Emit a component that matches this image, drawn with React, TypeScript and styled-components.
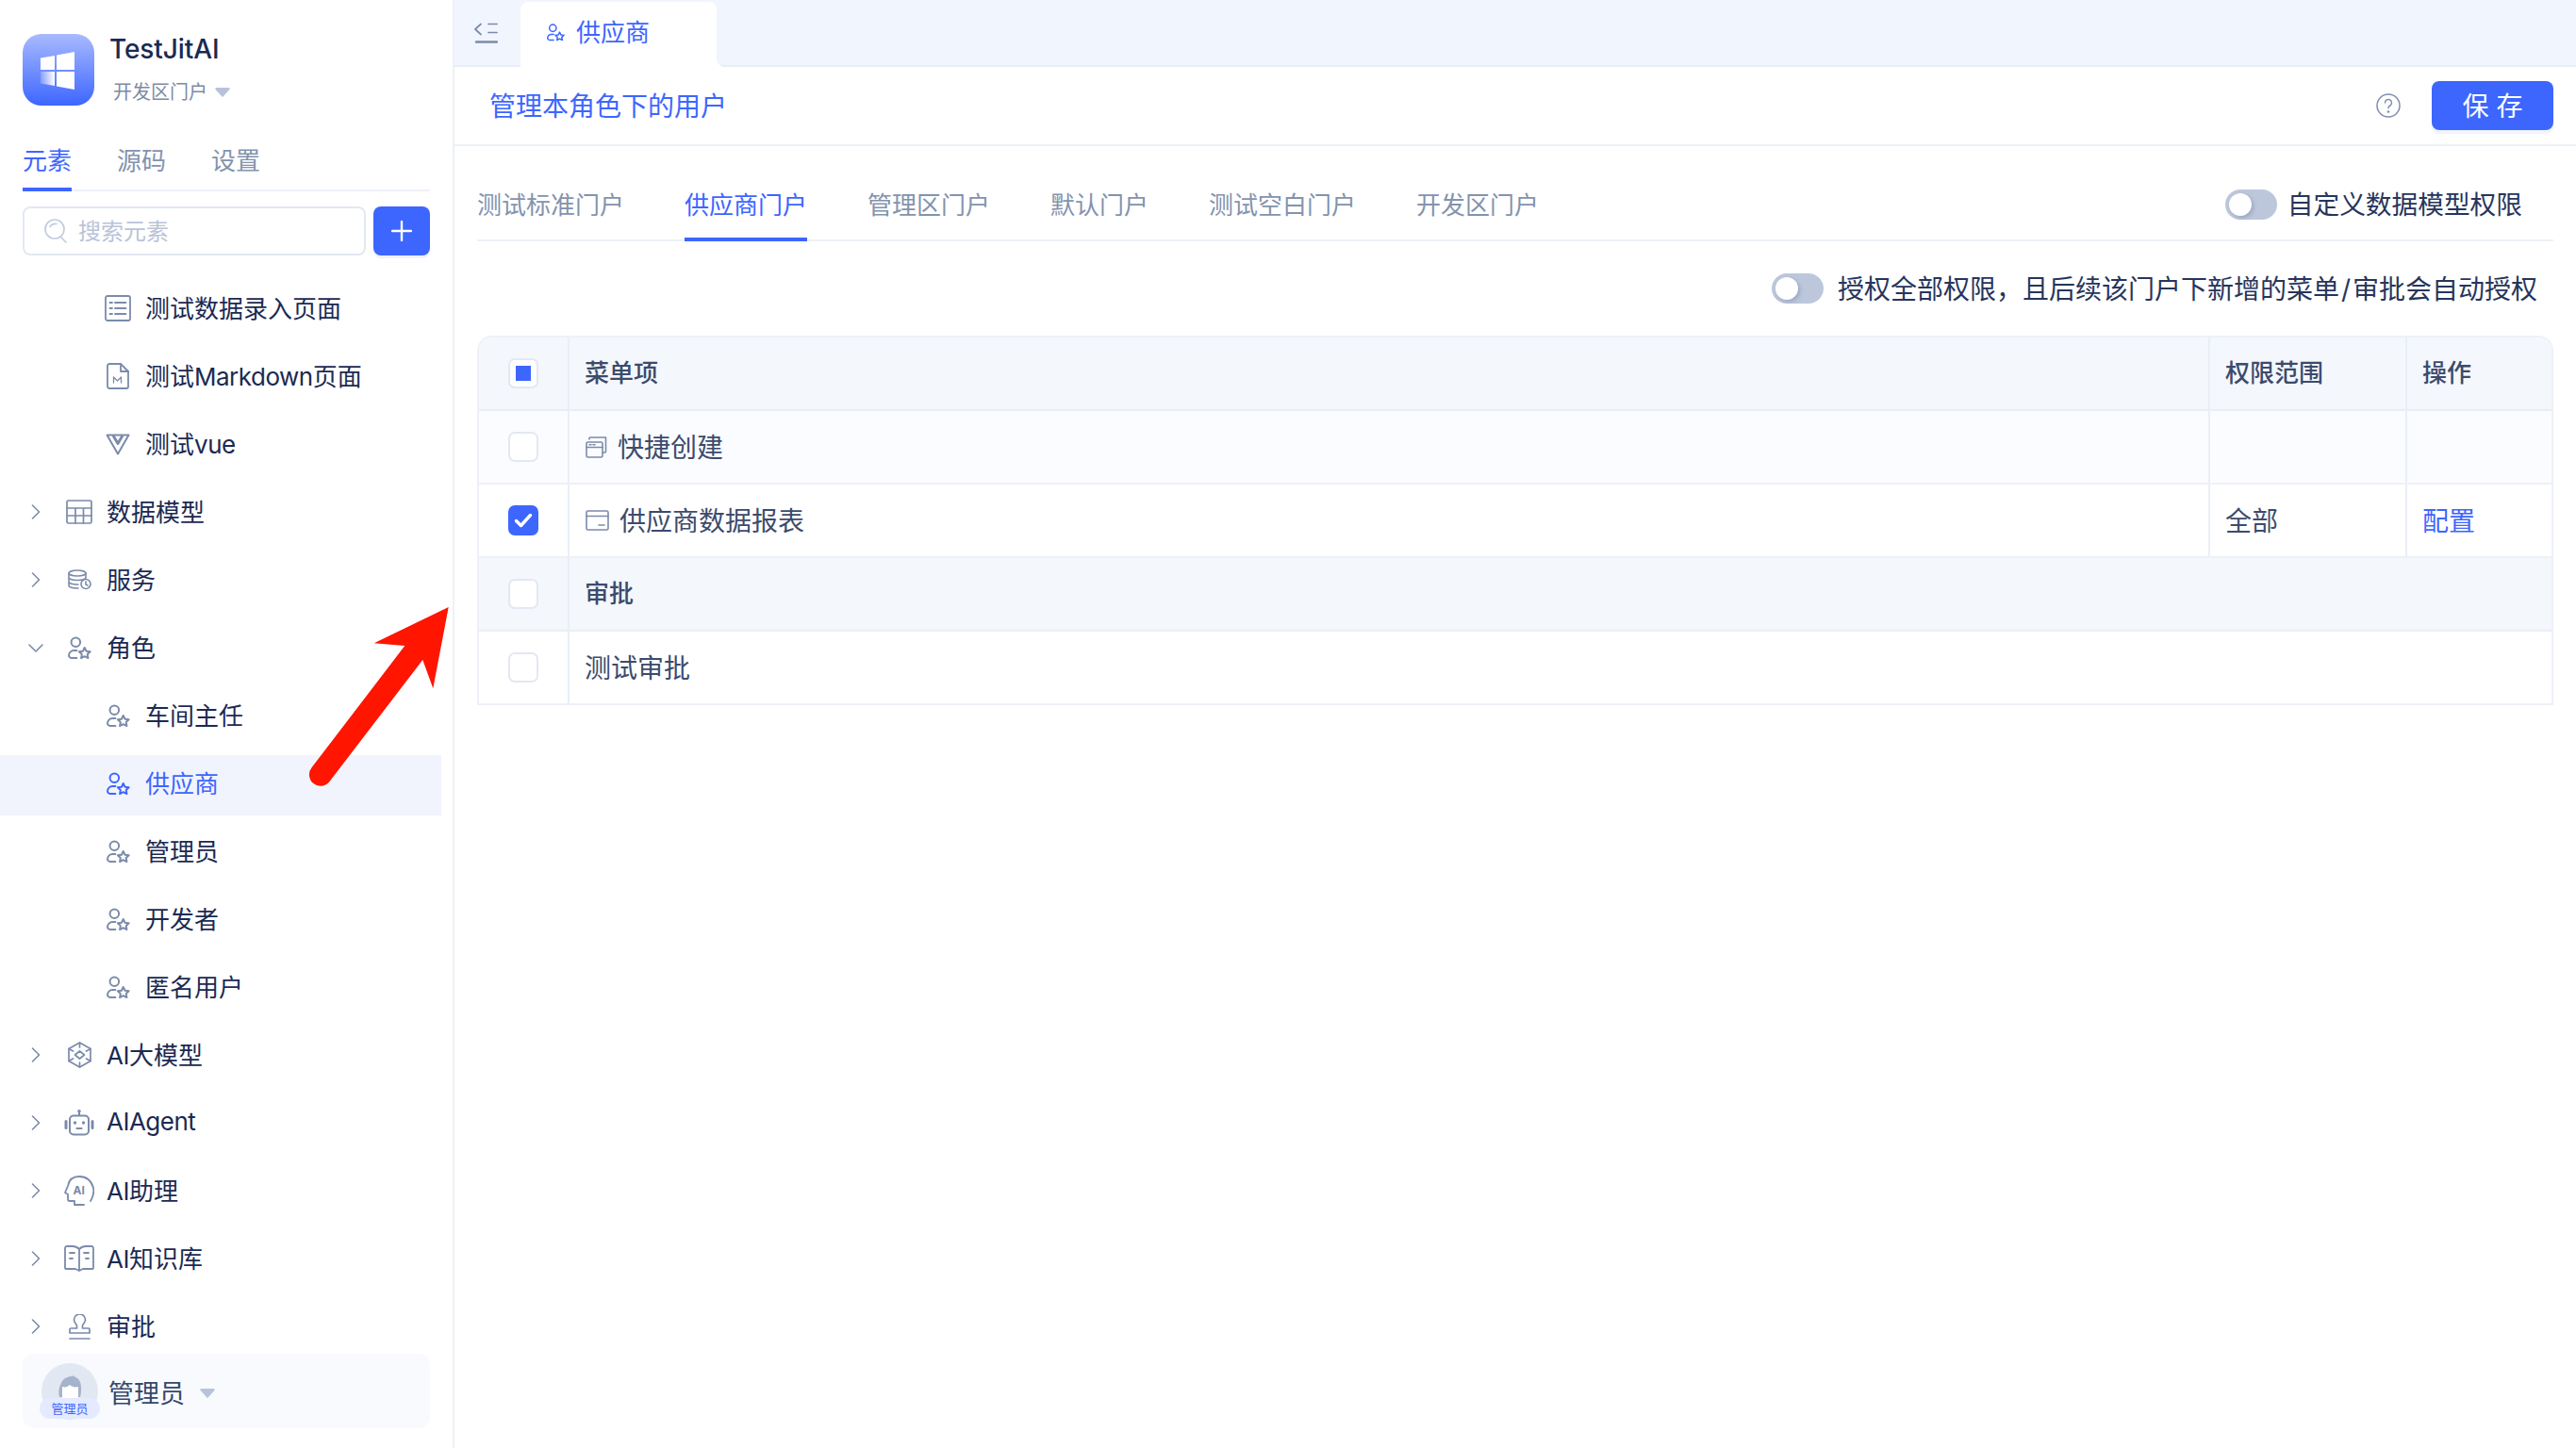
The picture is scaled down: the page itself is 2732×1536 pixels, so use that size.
import React from "react";
import styled, { createGlobalStyle } from "styled-components";

const BLUE = "#3d66ff";
const INK = "#1b2a52";
const CELL = "#3c4b6c";
const MUTED = "#8393ad";
const ICON = "#7b8bab";
const LINE = "#edf1f7";

const Global = createGlobalStyle`
  html, body { margin: 0; padding: 0; background: #fff; }
  #root { width: 2732px; height: 1536px; }
  * { box-sizing: border-box; }
  body { font-family: Inter, "Noto Sans CJK SC", "Noto Sans", sans-serif; color: ${INK}; }
`;

const Page = styled.div`
  position: relative;
  display: flex;
  width: 2732px;
  height: 1536px;
  overflow: hidden;
  background: #fff;
`;

/* ---------- sidebar ---------- */
const Sidebar = styled.aside`
  flex: 0 0 482px;
  height: 100%;
  display: flex;
  flex-direction: column;
  border-right: 2px solid ${LINE};
`;
const Brand = styled.div`
  display: flex;
  gap: 16px;
  height: 76px;
  margin: 36px 24px 0;
`;
const BrandText = styled.div`
  display: flex;
  flex-direction: column;
`;
const BrandName = styled.div`
  font-size: 28px;
  line-height: 32px;
  font-weight: 500;
  letter-spacing: -0.1px;
  color: ${INK};
`;
const BrandPortal = styled.div`
  display: flex;
  align-items: center;
  gap: 8px;
  margin: 14px 0 0 4px;
  font-size: 20px;
  line-height: 32px;
  color: #7d8aa3;
`;
const SideTabs = styled.div`
  display: flex;
  gap: 48px;
  height: 63px;
  margin: 28px 24px 0;
  border-bottom: 2px solid ${LINE};
`;
const SideTab = styled.div<{ $active?: boolean }>`
  position: relative;
  font-size: 26px;
  line-height: 61px;
  color: ${(p) => (p.$active ? BLUE : MUTED)};
  &::after {
    content: "";
    display: ${(p) => (p.$active ? "block" : "none")};
    position: absolute;
    left: 0;
    right: 0;
    bottom: -2px;
    height: 4px;
    background: ${BLUE};
  }
`;
const SearchRow = styled.div`
  display: flex;
  gap: 8px;
  height: 52px;
  margin: 16px 24px 0;
`;
const SearchBox = styled.div`
  flex: 1;
  display: flex;
  align-items: center;
  gap: 12px;
  padding-left: 21px;
  border: 2px solid #e3e8f2;
  border-radius: 8px;
  font-size: 24px;
  color: #b9c4d8;
`;
const SearchHint = styled.span`
  padding-bottom: 4px;
`;
const AddButton = styled.div`
  flex: 0 0 60px;
  display: flex;
  align-items: center;
  justify-content: center;
  border-radius: 8px;
  background: ${BLUE};
  box-shadow: 0 3px 0 #eef2ff;
`;
const Tree = styled.div`
  flex: 1;
  min-height: 0;
  overflow: hidden;
  display: flex;
  flex-direction: column;
  gap: 8px;
  width: 468px;
  margin-top: 26px;
`;
const TreeRow = styled.div<{ $level: number; $active?: boolean }>`
  flex: 0 0 64px;
  display: flex;
  align-items: center;
  padding: 0 0 4px ${(p) => (p.$level === 0 ? 28 : 108)}px;
  font-size: 26px;
  color: ${(p) => (p.$active ? BLUE : INK)};
  background: ${(p) => (p.$active ? "#f1f4fd" : "transparent")};
`;
const TreeLabel = styled.span`
  padding-bottom: 4px;
`;
const LatinRun = styled.span`
  letter-spacing: -0.5px;
`;
const ChevronSlot = styled.span`
  flex: 0 0 20px;
  margin-right: 19px;
  display: flex;
  align-items: center;
  justify-content: center;
`;
const TreeIcon = styled.span`
  flex: 0 0 34px;
  margin-right: 12px;
  display: flex;
  align-items: center;
  justify-content: center;
`;
const UserBar = styled.div`
  display: flex;
  align-items: center;
  flex: 0 0 79px;
  margin: 0 24px 21px;
  padding-left: 20px;
  border-radius: 12px;
  background: #f9fafd;
`;
const Avatar = styled.div`
  position: relative;
  width: 60px;
  height: 60px;
  border-radius: 50%;
  background: #e2e8f2;
`;
const AvatarBadge = styled.span`
  position: absolute;
  left: -2px;
  top: 37px;
  width: 64px;
  height: 22px;
  border-radius: 11px;
  background: #e4eaff;
  color: ${BLUE};
  font-size: 13px;
  line-height: 22px;
  text-align: center;
`;
const UserName = styled.span`
  margin: 0 16px 0 11px;
  padding-top: 2px;
  font-size: 27px;
  color: #35476b;
`;
const UserCaret = styled.span`
  display: flex;
  padding-top: 4px;
`;

/* ---------- main ---------- */
const Main = styled.main`
  flex: 1;
  min-width: 0;
  display: flex;
  flex-direction: column;
`;
const TopBar = styled.div`
  flex: 0 0 71px;
  display: flex;
  align-items: flex-end;
  padding-left: 21px;
  background: #f1f5fd;
  border-bottom: 2px solid #e8edf6;
`;
const CollapseSlot = styled.div`
  align-self: stretch;
  display: flex;
  align-items: center;
  margin-right: 24px;
`;
const PageTab = styled.div`
  position: relative;
  width: 208px;
  height: 69px;
  margin-bottom: -2px;
  padding: 0 0 5px 28px;
  display: flex;
  align-items: center;
  gap: 12px;
  background: #fff;
  border-radius: 8px 8px 0 0;
  font-size: 26px;
  color: ${BLUE};
  &::after {
    content: "";
    position: absolute;
    right: -8px;
    bottom: 0;
    width: 8px;
    height: 8px;
    background: radial-gradient(circle at 100% 0, transparent 7.5px, #fff 8px);
  }
`;
const PageTabLabel = styled.span`
  padding-bottom: 4px;
`;
const TitleBar = styled.div`
  flex: 0 0 84px;
  display: flex;
  align-items: center;
  padding: 0 24px 0 37px;
  border-bottom: 2px solid ${LINE};
`;
const PageTitle = styled.div`
  flex: 1;
  padding-bottom: 3px;
  font-size: 28px;
  color: ${BLUE};
`;
const HelpSlot = styled.span`
  display: flex;
  margin-right: 33px;
`;
const SaveButton = styled.div`
  width: 129px;
  height: 52px;
  padding-bottom: 3px;
  display: flex;
  align-items: center;
  justify-content: center;
  border-radius: 8px;
  background: ${BLUE};
  box-shadow: 0 4px 0 #f1f4ff;
  color: #fff;
  font-size: 28px;
  white-space: pre;
`;
const Content = styled.div`
  flex: 1;
  min-height: 0;
  padding: 0 24px;
`;
const PortalTabs = styled.div`
  display: flex;
  gap: 64px;
  height: 101px;
  padding-right: 33px;
  border-bottom: 2px solid ${LINE};
`;
const PortalTab = styled.div<{ $active?: boolean }>`
  position: relative;
  height: 99px;
  padding-top: 21px;
  display: flex;
  align-items: center;
  font-size: 26px;
  color: ${(p) => (p.$active ? BLUE : MUTED)};
  &::after {
    content: "";
    display: ${(p) => (p.$active ? "block" : "none")};
    position: absolute;
    left: 0;
    right: 0;
    bottom: -2px;
    height: 4px;
    background: ${BLUE};
  }
`;
const SwitchLine = styled.label<{ $push?: boolean }>`
  display: flex;
  align-items: center;
  gap: ${(p) => (p.$push ? 11 : 15)}px;
  margin-left: ${(p) => (p.$push ? "auto" : "0")};
  padding-top: ${(p) => (p.$push ? "24px" : "0")};
  font-size: ${(p) => (p.$push ? 27.7 : 28)}px;
  color: #26355c;
`;
const SwitchText = styled.span`
  padding-bottom: 3px;
`;
const Slash = styled.span`
  padding: 0 2px;
`;
const Track = styled.span`
  position: relative;
  width: 55px;
  height: 32px;
  border-radius: 16px;
  background: #bdc7dc;
`;
const Knob = styled.span`
  position: absolute;
  left: 4px;
  top: 4px;
  width: 24px;
  height: 24px;
  border-radius: 50%;
  background: #fff;
  box-shadow: 2px 2px 4px rgba(90, 105, 140, 0.35);
`;
const SwitchRow = styled.div`
  height: 100px;
  display: flex;
  align-items: center;
  justify-content: flex-end;
  padding-right: 17px;
`;
const Table = styled.div`
  border: 2px solid ${LINE};
  border-bottom: 0;
  border-radius: 16px 16px 0 0;
  overflow: hidden;
`;
const Row = styled.div<{ $tone: "head" | "soft" | "plain" }>`
  display: grid;
  grid-template-columns: 96px 1fr 209px 153px;
  height: 78px;
  border-bottom: 2px solid ${(p) => (p.$tone === "head" ? "#e9eef6" : LINE)};
  background: ${(p) => (p.$tone === "head" ? "#f4f7fc" : p.$tone === "soft" ? "#fbfcff" : "#fff")};
`;
const CheckCell = styled.div`
  display: flex;
  align-items: center;
  justify-content: center;
  border-right: 2px solid #eaeff6;
`;
const Cell = styled.div<{ $head?: boolean; $wide?: boolean; $link?: boolean; $last?: boolean }>`
  grid-column: ${(p) => (p.$wide ? "2 / -1" : "auto")};
  display: flex;
  align-items: center;
  gap: 11px;
  padding: 0 0 ${(p) => (p.$head ? 6 : 3)}px 16px;
  font-size: ${(p) => (p.$head ? 26 : 28)}px;
  font-weight: ${(p) => (p.$head ? 500 : 400)};
  color: ${(p) => (p.$link ? BLUE : CELL)};
  border-right: ${(p) => (p.$wide || p.$last ? "none" : "2px solid #eaeff6")};
  svg {
    margin: 3px 0 0 1px;
  }
`;
const Check = styled.span<{ $state?: "on" | "some" }>`
  width: 32px;
  height: 32px;
  display: flex;
  align-items: center;
  justify-content: center;
  border-radius: 7px;
  border: ${(p) => (p.$state === "on" ? "none" : "2px solid #e3e8f2")};
  background: ${(p) => (p.$state === "on" ? BLUE : "#fff")};
`;
const CheckSquare = styled.span`
  width: 16px;
  height: 16px;
  background: ${BLUE};
`;
const ArrowLayer = styled.svg`
  position: absolute;
  left: 320px;
  top: 630px;
  width: 170px;
  height: 210px;
  pointer-events: none;
`;

/* ---------- drawings ---------- */
type IP = { c?: string; s?: number };
const Line = (c: string, w = 1.6) => ({ fill: "none", stroke: c, strokeWidth: w, strokeLinecap: "round" as const, strokeLinejoin: "round" as const });

const Role = ({ c = ICON, s = 25 }: IP) => (
  <svg width={s} height={s} viewBox="0 0 24 24" {...Line(c, 1.9)}>
    <circle cx="8" cy="6" r="4.6" />
    <path d="M9 14.500H6a5 5 0 0 0-5 5A2.500 2.500 0 0 0 3.500 22H9" />
    <path d="M17 11.500l1.800 3.600 3.900.5-2.800 2.700.7 3.900-3.600-1.900-3.500 1.900.7-3.900-2.800-2.700 3.900-.5z" />
  </svg>
);
const ListIcon = () => (
  <svg width="28" height="28" viewBox="0 0 28 28" {...Line(ICON, 1.8)}>
    <rect x="1" y="1" width="26" height="26" rx="2" />
    <path d="M5.500 8h2.500M11 8h11.500M5.500 14h2.500M11 14h11.500M5.500 20h2.500M11 20h11.500" />
  </svg>
);
const MdIcon = () => (
  <svg width="24" height="28" viewBox="0 0 24 28" {...Line(ICON, 1.8)}>
    <path d="M3 1h12l8 8v16a2 2 0 0 1-2 2H3a2 2 0 0 1-2-2V3a2 2 0 0 1 2-2z" />
    <path d="M15 1v8h8" />
    <path d="M7.500 21v-6l4 4 4-4v6" strokeWidth="1.3" />
  </svg>
);
const VueIcon = () => (
  <svg width="26" height="23" viewBox="0 0 26 23" fill="none" stroke={ICON} strokeLinejoin="round">
    <path d="M1.500 1.500h23L13 21.500z" strokeWidth="2" />
    <path d="M8 2l5 8.500L18 2" strokeWidth="3" />
  </svg>
);
const TableIcon = () => (
  <svg width="28" height="26" viewBox="0 0 28 26" {...Line(ICON, 1.7)}>
    <rect x="1" y="1" width="26" height="24" rx="1.500" />
    <path d="M1 9h26M1 17h26M10 9v16M18.500 9v16" />
  </svg>
);
const DbIcon = () => (
  <svg width="25" height="22" viewBox="0 0 25 22" {...Line(ICON, 1.6)}>
    <ellipse cx="10" cy="4" rx="9" ry="3" />
    <path d="M1 4v13c0 1.700 4 3 9 3h1M19 4v5M1 8.500c0 1.700 4 3 9 3s9-1.300 9-3M1 13c0 1.700 4 3 9 3h1" />
    <circle cx="19" cy="15.500" r="5" />
    <path d="M19 13v3l2 1" />
  </svg>
);
const CubeIcon = () => (
  <svg width="25" height="28" viewBox="0 0 25 28" {...Line(ICON, 1.7)}>
    <path d="M12.500 1L24 7.500v13L12.500 27 1 20.500v-13z" />
    <path d="M12.500 1v5M1 7.500l4.500 2.500M24 7.500L19.500 10M12.500 27v-5M1 20.500l4.500-2.500M24 20.500L19.500 18" />
    <path d="M12.500 10l5 4-5 4-5-4z" />
  </svg>
);
const RobotIcon = () => (
  <svg width="32" height="28" viewBox="0 0 32 28" fill="none">
    <rect x="6" y="6.500" width="20" height="20" rx="4" stroke={ICON} strokeWidth="2" />
    <path d="M16 6V2" stroke={ICON} strokeWidth="2" />
    <circle cx="16" cy="1.800" r="1.800" fill={ICON} />
    <rect x="0.500" y="11" width="3" height="10" rx="1.500" fill={ICON} />
    <rect x="28.500" y="11" width="3" height="10" rx="1.500" fill={ICON} />
    <circle cx="11.500" cy="14" r="1.700" fill={ICON} />
    <circle cx="20.500" cy="14" r="1.700" fill={ICON} />
    <path d="M13.500 20h5" stroke={ICON} strokeWidth="2.200" strokeLinecap="round" />
  </svg>
);
const HeadIcon = () => (
  <svg width="32" height="32" viewBox="0 0 32 32" {...Line(ICON, 1.8)}>
    <path d="M28 27c3-5 4-9 3-14C29 6 24 1 16 1 9 1 5 5 4 11L1 18l3 2v5a2 2 0 0 0 2 2h5v4h10" />
    <text x="9.500" y="19.500" fontSize="12" fontWeight="700" fill={ICON} stroke="none" fontFamily="Inter, sans-serif">
      AI
    </text>
  </svg>
);
const BookIcon = () => (
  <svg width="32" height="28" viewBox="0 0 32 28" {...Line(ICON, 1.8)}>
    <path d="M16 4C14 2 12 1 9 1H3a2 2 0 0 0-2 2v21a1 1 0 0 0 1 1h10l4 2 4-2h10a1 1 0 0 0 1-1V3a2 2 0 0 0-2-2h-6c-3 0-5 1-7 3zM16 4v22" />
    <path d="M6 8h5M6 14h3M21 8h5M23 14h3" />
  </svg>
);
const StampIcon = () => (
  <svg width="23" height="27" viewBox="0 0 23 27" {...Line(ICON, 1.7)}>
    <path d="M8.500 13c.5-2-3-3.500-3-7a6 6 0 0 1 12 0c0 3.500-3.500 5-3 7v2H21a1 1 0 0 1 1 1v4H1v-4a1 1 0 0 1 1-1h6.500z" />
    <path d="M1 26h21" />
  </svg>
);
const ChevronRight = () => (
  <svg width="10" height="16" viewBox="0 0 10 16" {...Line(ICON, 1.6)}>
    <path d="M1.500 1l7 7-7 7" />
  </svg>
);
const ChevronDown = () => (
  <svg width="16" height="9" viewBox="0 0 16 9" {...Line(ICON, 1.6)}>
    <path d="M1 1l7 7 7-7" />
  </svg>
);
const Caret = () => (
  <svg width="16" height="10" viewBox="0 0 16 10" fill="#b8c3da">
    <path d="M1.500 0h13a1.200 1.200 0 0 1 .9 2L8.800 9.300a1 1 0 0 1-1.600 0L.6 2a1.200 1.200 0 0 1 .9-2z" />
  </svg>
);
const LogoMark = () => (
  <svg width="76" height="76" viewBox="0 0 76 76">
    <defs>
      <linearGradient id="logoBg" x1="0" y1="0" x2="0" y2="1">
        <stop offset="0" stopColor="#a8baff" />
        <stop offset="1" stopColor="#3d66ff" />
      </linearGradient>
      <linearGradient id="logoPane" x1="0" y1="0" x2="1" y2="0">
        <stop offset="0" stopColor="#fff" stopOpacity="0.2" />
        <stop offset="1" stopColor="#fff" />
      </linearGradient>
    </defs>
    <rect width="76" height="76" rx="20" fill="url(#logoBg)" />
    <path d="M19 25.500l15-2.500v15H19z" fill="#fff" />
    <path d="M36 22.500L55 19v19H36z" fill="#fff" />
    <path d="M19 40h15v15l-15-2.500z" fill="url(#logoPane)" />
    <path d="M36 40h19v19l-19-3.500z" fill="#fff" />
  </svg>
);
const SearchIcon = () => (
  <svg width="24" height="26" viewBox="0 0 24 26" {...Line("#c3cddf", 1.7)}>
    <circle cx="11" cy="11" r="10" />
    <path d="M6 8.500C7.500 6 10 5 13 5.500M17.500 19.500L23 25" />
  </svg>
);
const PlusIcon = () => (
  <svg width="22" height="22" viewBox="0 0 22 22" {...Line("#fff", 2.4)}>
    <path d="M11 1v20M1 11h20" />
  </svg>
);
const CollapseIcon = () => (
  <svg width="25" height="22" viewBox="0 0 25 22" fill="none" strokeLinecap="round" strokeLinejoin="round">
    <path d="M7 1.500L1 7l6 5.500" stroke="#7b8bab" strokeWidth="1.700" />
    <path d="M15 1.500h9M15 10.500h9" stroke="#7b8bab" strokeWidth="1.700" />
    <path d="M2 20.500h22" stroke="#7b8bab" strokeWidth="2.400" />
  </svg>
);
const HelpIcon = () => (
  <svg width="26" height="26" viewBox="0 0 26 26" {...Line("#7f8fad", 1.500)}>
    <circle cx="13" cy="13" r="12" />
    <path d="M9.500 10a3.500 3.500 0 1 1 5.300 3c-1.200.7-1.800 1.300-1.800 2.800" />
    <circle cx="13" cy="19.500" r=".6" fill="#7f8fad" />
  </svg>
);
const StackIcon = () => (
  <svg width="23" height="23" viewBox="0 0 23 23" {...Line(ICON, 1.600)}>
    <rect x="1" y="6" width="17" height="16" rx="1.500" />
    <path d="M1 11.500h17M4 3V2a1 1 0 0 1 1-1h16.500v15a1 1 0 0 1-1 1H18" />
    <path d="M4 8.800h2M8 8.800h2" />
  </svg>
);
const CardIcon = () => (
  <svg width="25" height="22" viewBox="0 0 25 22" {...Line(ICON, 1.600)}>
    <rect x="1" y="1" width="23" height="20" rx="1.500" />
    <path d="M1 6.500h23M14 16h6" />
  </svg>
);
const CheckMark = () => (
  <svg width="20" height="16" viewBox="0 0 20 16" {...Line("#fff", 3.400)}>
    <path d="M2.500 8.500l5 5 10-11" />
  </svg>
);
const AvatarHead = () => (
  <svg width="60" height="60" viewBox="0 0 60 60">
    <path d="M19 36c-1-4-1-10 2-15 2-5 7-7 11-7 2-1 3 0 4 1 4 1 6 6 6 11 0 4 0 7-1 10z" fill="#a6b3cc" />
    <path d="M22 38V25c3 1 6 0 8-2 2 2 6 3 9 2v13z" fill="#fff" />
  </svg>
);

type Node = { label: React.ReactNode; key: string; level: number; icon: React.ReactNode; open?: boolean; active?: boolean };
const nodes: Node[] = [
  { key: "a", label: "测试数据录入页面", level: 1, icon: <ListIcon /> },
  { key: "b", label: <>测试<LatinRun>Markdown</LatinRun>页面</>, level: 1, icon: <MdIcon /> },
  { key: "c", label: <>测试<LatinRun>vue</LatinRun></>, level: 1, icon: <VueIcon /> },
  { key: "d", label: "数据模型", level: 0, icon: <TableIcon /> },
  { key: "e", label: "服务", level: 0, icon: <DbIcon /> },
  { key: "f", label: "角色", level: 0, icon: <Role />, open: true },
  { key: "g", label: "车间主任", level: 1, icon: <Role /> },
  { key: "h", label: "供应商", level: 1, icon: <Role c={BLUE} />, active: true },
  { key: "i", label: "管理员", level: 1, icon: <Role /> },
  { key: "j", label: "开发者", level: 1, icon: <Role /> },
  { key: "k", label: "匿名用户", level: 1, icon: <Role /> },
  { key: "l", label: <><LatinRun>AI</LatinRun>大模型</>, level: 0, icon: <CubeIcon /> },
  { key: "m", label: <LatinRun>AIAgent</LatinRun>, level: 0, icon: <RobotIcon /> },
  { key: "n", label: <><LatinRun>AI</LatinRun>助理</>, level: 0, icon: <HeadIcon /> },
  { key: "o", label: <><LatinRun>AI</LatinRun>知识库</>, level: 0, icon: <BookIcon /> },
  { key: "p", label: "审批", level: 0, icon: <StampIcon /> },
];
const portals = ["测试标准门户", "供应商门户", "管理区门户", "默认门户", "测试空白门户", "开发区门户"];

const Switch = () => (
  <Track>
    <Knob />
  </Track>
);

export default function App() {
  return (
    <Page>
      <Global />
      <Sidebar>
        <Brand>
          <LogoMark />
          <BrandText>
            <BrandName>TestJitAI</BrandName>
            <BrandPortal>
              开发区门户
              <Caret />
            </BrandPortal>
          </BrandText>
        </Brand>
        <SideTabs>
          <SideTab $active>元素</SideTab>
          <SideTab>源码</SideTab>
          <SideTab>设置</SideTab>
        </SideTabs>
        <SearchRow>
          <SearchBox>
            <SearchIcon />
            <SearchHint>搜索元素</SearchHint>
          </SearchBox>
          <AddButton>
            <PlusIcon />
          </AddButton>
        </SearchRow>
        <Tree>
          {nodes.map((n) => (
            <TreeRow key={n.key} $level={n.level} $active={n.active}>
              {n.level === 0 && <ChevronSlot>{n.open ? <ChevronDown /> : <ChevronRight />}</ChevronSlot>}
              <TreeIcon>{n.icon}</TreeIcon>
              <TreeLabel>{n.label}</TreeLabel>
            </TreeRow>
          ))}
        </Tree>
        <UserBar>
          <Avatar>
            <AvatarHead />
            <AvatarBadge>管理员</AvatarBadge>
          </Avatar>
          <UserName>管理员</UserName>
          <UserCaret>
            <Caret />
          </UserCaret>
        </UserBar>
      </Sidebar>
      <Main>
        <TopBar>
          <CollapseSlot>
            <CollapseIcon />
          </CollapseSlot>
          <PageTab>
            <Role c={BLUE} s={19} />
            <PageTabLabel>供应商</PageTabLabel>
          </PageTab>
        </TopBar>
        <TitleBar>
          <PageTitle>管理本角色下的用户</PageTitle>
          <HelpSlot>
            <HelpIcon />
          </HelpSlot>
          <SaveButton>保 存</SaveButton>
        </TitleBar>
        <Content>
          <PortalTabs>
            {portals.map((p) => (
              <PortalTab key={p} $active={p === "供应商门户"}>
                {p}
              </PortalTab>
            ))}
            <SwitchLine $push>
              <Switch />
              <SwitchText>自定义数据模型权限</SwitchText>
            </SwitchLine>
          </PortalTabs>
          <SwitchRow>
            <SwitchLine>
              <Switch />
              <SwitchText>
                授权全部权限，且后续该门户下新增的菜单<Slash>/</Slash>审批会自动授权
              </SwitchText>
            </SwitchLine>
          </SwitchRow>
          <Table>
            <Row $tone="head">
              <CheckCell>
                <Check $state="some">
                  <CheckSquare />
                </Check>
              </CheckCell>
              <Cell $head>菜单项</Cell>
              <Cell $head>权限范围</Cell>
              <Cell $head $last>
                操作
              </Cell>
            </Row>
            <Row $tone="soft">
              <CheckCell>
                <Check />
              </CheckCell>
              <Cell>
                <StackIcon />
                快捷创建
              </Cell>
              <Cell />
              <Cell $last />
            </Row>
            <Row $tone="plain">
              <CheckCell>
                <Check $state="on">
                  <CheckMark />
                </Check>
              </CheckCell>
              <Cell>
                <CardIcon />
                供应商数据报表
              </Cell>
              <Cell>全部</Cell>
              <Cell $link $last>
                配置
              </Cell>
            </Row>
            <Row $tone="head">
              <CheckCell>
                <Check />
              </CheckCell>
              <Cell $head $wide>
                审批
              </Cell>
            </Row>
            <Row $tone="plain">
              <CheckCell>
                <Check />
              </CheckCell>
              <Cell $wide>测试审批</Cell>
            </Row>
          </Table>
        </Content>
      </Main>
      <ArrowLayer viewBox="320 630 170 210">
        <path
          d="M475.700 644L459.300 730.300L448.300 700L349.300 829.300A12 12 0 0 1 330.700 814.100L429.300 685L396.700 682.300Z"
          fill="#ff1500"
        />
      </ArrowLayer>
    </Page>
  );
}
